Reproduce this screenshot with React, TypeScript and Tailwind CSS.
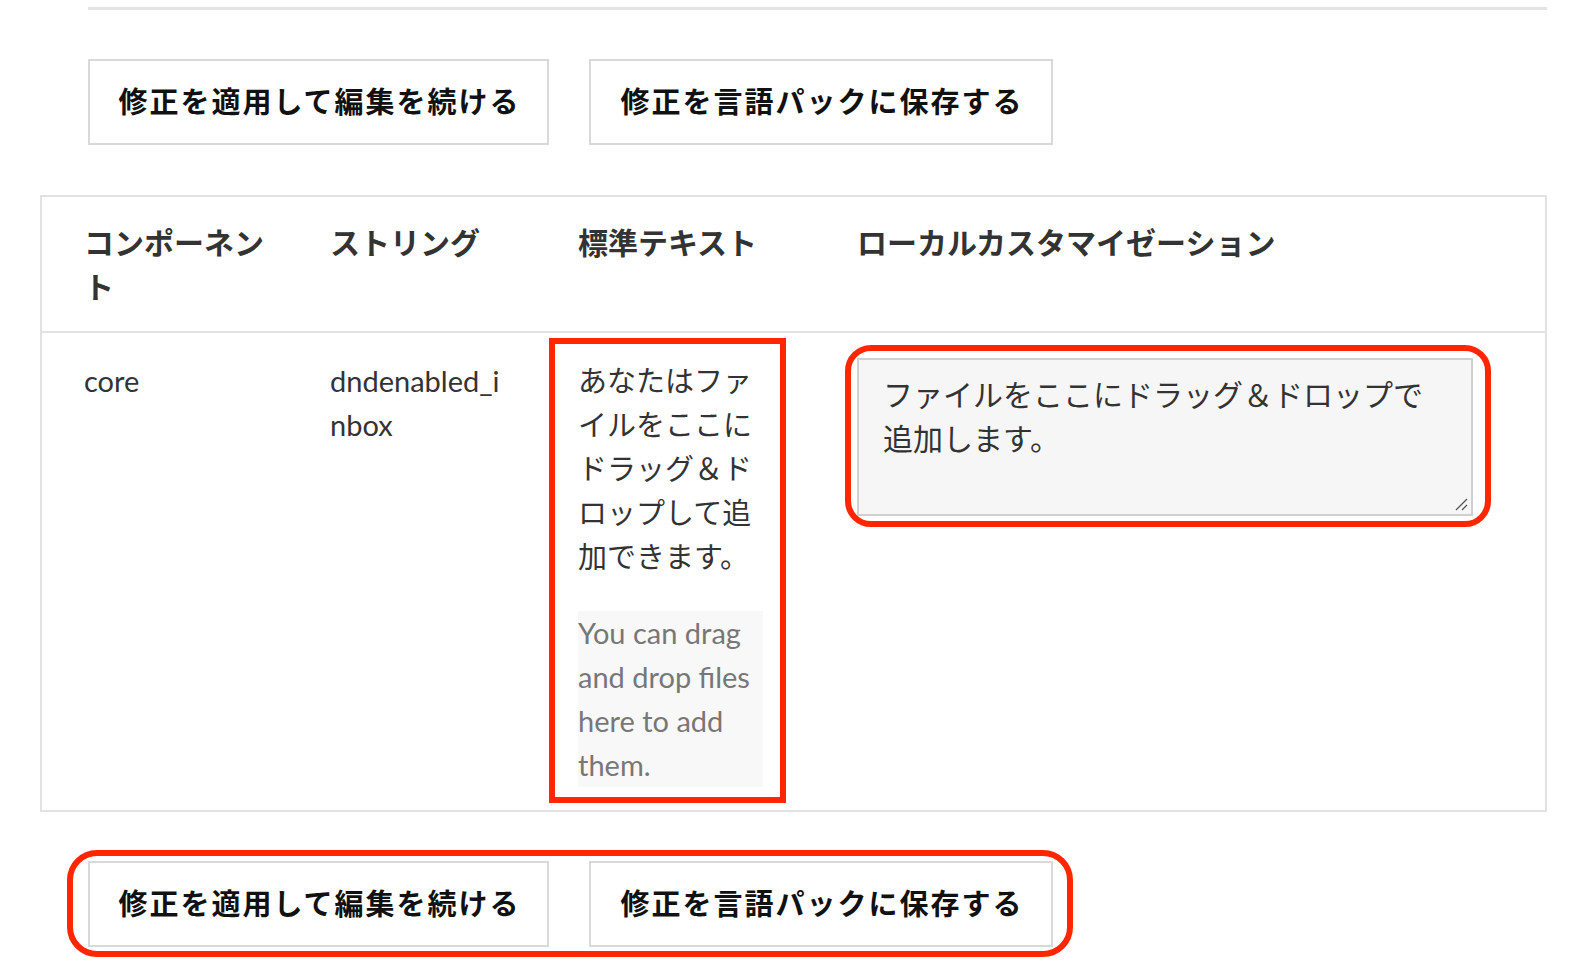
import React from "react";

function ActionButtons() {
  return (
    <div className="flex gap-[40px]">
      <button className="flex h-[86px] w-[461px] items-center justify-center border-2 border-[#d9d9d9] bg-white pl-[2px] text-[29px] font-bold tracking-[2px] text-[#111]">
        修正を適用して編集を続ける
      </button>
      <button className="flex h-[86px] w-[464px] items-center justify-center border-2 border-[#d9d9d9] bg-white pl-[2px] text-[29px] font-bold tracking-[2px] text-[#111]">
        修正を言語パックに保存する
      </button>
    </div>
  );
}

export default function App() {
  return (
    <div className="min-h-screen overflow-hidden bg-white font-['Lato','Noto_Sans_CJK_JP',sans-serif]">
      <div className="ml-[88px] mt-[7px] h-[3px] w-[1459px] bg-[#e4e4e4]" />

      <div className="ml-[88px] mt-[49px]">
        <ActionButtons />
      </div>

      <div className="ml-[40px] mt-[50px] w-[1507px] border-2 border-[#e2e2e2]">
        <div className="grid grid-cols-[246px_249px_279px_1fr] border-b-2 border-[#e2e2e2] text-[30px] font-bold leading-[44px] text-[#333]">
          <div className="py-[23px] pl-[42px] pr-[20px]">コンポーネント</div>
          <div className="py-[23px] pl-[42px] pr-[23px]">ストリング</div>
          <div className="py-[23px] pl-[41px] pr-[53px]">標準テキスト</div>
          <div className="py-[23px] pl-[41px]">ローカルカスタマイゼーション</div>
        </div>

        <div className="grid grid-cols-[246px_249px_279px_1fr] text-[29px] leading-[44px] text-[#333]">
          <div className="pl-[42px] pr-[20px] pt-[26px]">core</div>
          <div className="break-all pl-[42px] pr-[23px] pt-[26px]">dndenabled_inbox</div>
          <div className="pb-[23px] pl-[41px] pt-[26px]">
            <div className="relative w-[185px]">
              <p>あなたはファイルをここにドラッグ＆ドロップして追加できます。</p>
              <p className="mt-[32px] bg-[#f8f8f8] leading-[44px] text-[#777]">
                You can drag and drop files here to add them.
              </p>
              <div className="pointer-events-none absolute -bottom-[16px] -left-[29px] -right-[23px] -top-[21px] border-[6px] border-[#ff2600]" />
            </div>
          </div>
          <div className="pl-[41px] pt-[25px]">
            <div className="relative w-[616px]">
              <textarea
                className="block h-[158px] w-[616px] resize-none border-2 border-[#d0d0d0] bg-[#f6f6f6] pl-[24px] pr-[40px] pt-[12px] text-[30px] leading-[44px] text-[#333] outline-none"
                defaultValue="ファイルをここにドラッグ＆ドロップで追加します。"
              />
              <svg
                className="pointer-events-none absolute bottom-[5px] right-[5px] h-[14px] w-[14px] text-[#555]"
                viewBox="0 0 14 14"
                fill="none"
                stroke="currentColor"
                strokeWidth={1.3}
              >
                <path d="M13 2L2 13M13 8L8 13" />
              </svg>
              <div className="pointer-events-none absolute -bottom-[11px] -left-[12px] -right-[18px] -top-[13px] rounded-[26px] border-[6px] border-[#ff2600]" />
            </div>
          </div>
        </div>
      </div>

      <div className="relative ml-[88px] mt-[49px] w-fit">
        <ActionButtons />
        <div className="pointer-events-none absolute -bottom-[10px] -left-[21px] -right-[20px] -top-[11px] rounded-[30px] border-[6px] border-[#ff2600]" />
      </div>
    </div>
  );
}
